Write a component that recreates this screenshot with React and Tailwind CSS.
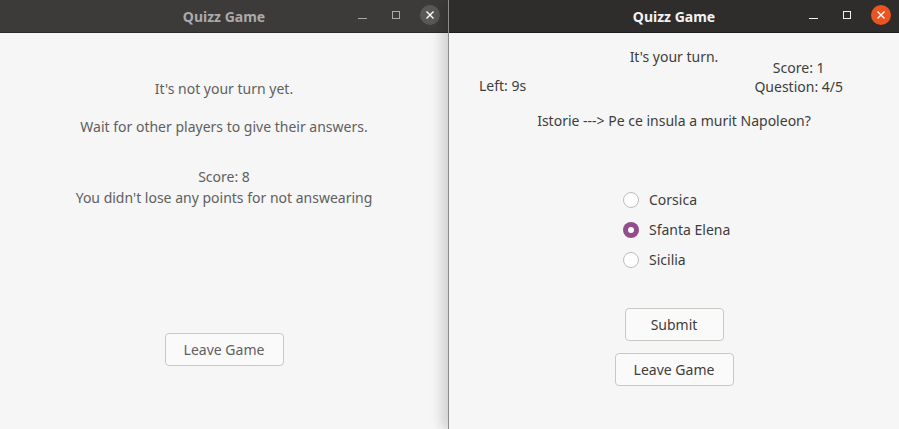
const font = { fontFamily: '"Noto Sans", "Open Sans", sans-serif' };

const TitleBar = ({ active }) => (
    <div className={`h-[33px] flex items-center relative border-b ${active ? 'bg-[#2f2d2c] border-[#1e1d1c]' : 'bg-[#3d3b39] border-[#2c2b2a]'}`}>
        <div className={`flex-1 text-center text-[14px] font-bold ${active ? 'text-[#f2f2f2]' : 'text-[#aaaaaa]'}`}>
            Quizz Game
        </div>
        <div className="absolute right-[8px] top-[5px] flex items-center gap-[14px]">
            <div className="w-[20px] h-[20px] flex items-center justify-center">
                <div className={`w-[9px] h-[1px] mt-[6px] ${active ? 'bg-[#f2f2f2]' : 'bg-[#aaaaaa]'}`} />
            </div>
            <div className="w-[20px] h-[20px] flex items-center justify-center">
                <div className={`w-[8px] h-[8px] border ${active ? 'border-[#f2f2f2]' : 'border-[#aaaaaa]'}`} />
            </div>
            <div className={`w-[20px] h-[20px] rounded-full flex items-center justify-center ${active ? 'bg-[#e95420]' : 'bg-[#5a5856]'}`}>
                <svg width="10" height="10" viewBox="0 0 10 10">
                    <path d="M1.5 1.5 L8.5 8.5 M8.5 1.5 L1.5 8.5" stroke="#ffffff" strokeWidth="1.4" />
                </svg>
            </div>
        </div>
    </div>
);

const Button = ({ children, width, className = '' }) => (
    <button className={`${width} h-[33px] border border-[#cdc7c2] rounded-[4px] bg-[#fafafa] text-[14px] text-[#3d3d3d] ${className}`}>
        {children}
    </button>
);

const Radio = ({ label, checked }) => (
    <div className="flex items-center h-[30px]">
        {checked ? (
            <div className="w-[16px] h-[16px] rounded-full bg-[#924d8b] flex items-center justify-center">
                <div className="w-[6px] h-[6px] rounded-full bg-white" />
            </div>
        ) : (
            <div className="w-[16px] h-[16px] rounded-full border border-[#bdbdbd] bg-white" />
        )}
        <span className="ml-[10px] text-[14px] text-[#3d3d3d]">{label}</span>
    </div>
);

export default function App() {
    return (
        <div className="w-[899px] h-[429px] flex overflow-hidden bg-[#f6f6f6]" style={font}>
            {/* waiting player */}
            <div className="w-[448px] h-full flex flex-col shrink-0">
                <TitleBar />
                <div className="flex-1 bg-[#f6f6f6] flex flex-col items-center text-[14px] text-[#606060] leading-[20px]">
                    <p className="mt-[46px]">It's not your turn yet.</p>
                    <p className="mt-[18px]">Wait for other players to give their answers.</p>
                    <p className="mt-[30px]">Score: 8</p>
                    <p className="mt-[1px]">You didn't lose any points for not answearing</p>
                    <Button width="w-[119px]" className="mt-[125px] text-[#606060]">Leave Game</Button>
                </div>
            </div>

            {/* active player */}
            <div className="relative z-10 w-[451px] h-full flex flex-col border-l border-[#8c8c8c] shadow-[-6px_0_12px_rgba(0,0,0,0.16)]">
                <TitleBar active />
                <div className="flex-1 bg-[#f6f6f6] flex flex-col text-[14px] text-[#3d3d3d] leading-[20px]">
                    <p className="mt-[14px] text-center">It's your turn.</p>
                    <div className="flex justify-between items-end pl-[30px] pr-[56px] mt-[-9px]">
                        <span>Left: 9s</span>
                        <div className="flex flex-col items-center leading-[19px]">
                            <span>Score: 1</span>
                            <span>Question: 4/5</span>
                        </div>
                    </div>
                    <p className="mt-[15px] text-center">Istorie ---&gt; Pe ce insula a murit Napoleon?</p>
                    <div className="ml-[174px] mt-[54px] flex flex-col">
                        <Radio label="Corsica" />
                        <Radio label="Sfanta Elena" checked />
                        <Radio label="Sicilia" />
                    </div>
                    <div className="flex flex-col items-center mt-[33px] gap-[12px]">
                        <Button width="w-[99px]">Submit</Button>
                        <Button width="w-[119px]">Leave Game</Button>
                    </div>
                </div>
            </div>
        </div>
    );
}
